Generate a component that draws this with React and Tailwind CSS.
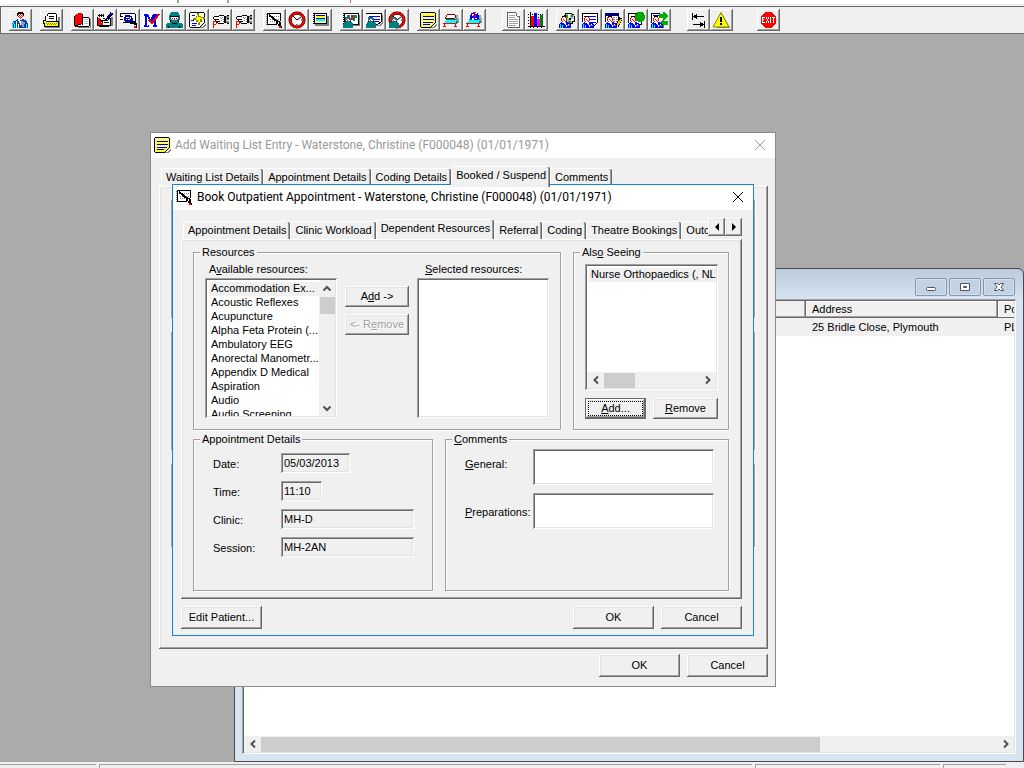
import React, { useState } from "react";
import clsx from "clsx";

const raised =
  "bg-[#f0f0f0] shadow-[inset_-1px_-1px_0_#696969,inset_1px_1px_0_#fff,inset_-2px_-2px_0_#a0a0a0,inset_2px_2px_0_#e3e3e3]";
const sunken =
  "shadow-[inset_1px_1px_0_#a0a0a0,inset_-1px_-1px_0_#fff,inset_2px_2px_0_#696969,inset_-2px_-2px_0_#e3e3e3]";

/* ---------- toolbar icons, drawn on a 19x18 grid ---------- */

const P = ({ f, d }) => <path fill={f} d={d} />;
const L = ({ s = "#000", w = 1, d }) => <path fill="none" stroke={s} strokeWidth={w} d={d} />;

const Clinician = () => (
  <g>
    <P f="#fff" d="M4 6h4v5H4z" />
    <P f="#f00" d="M3 7h1v3H3zM8 7h1v3H8zM4 6h1v1H4zM7 6h1v1H7zM5 8h1v1H5zM6 9h1v1H6zM4 10h1v1H4zM7 10h1v1H7z" />
    <P f="#000" d="M4 5h4v1H4z" />
    <P f="#00f" d="M3 11h1v1h4v-1h2v1h2v1h1v4H1v-4h1v-1h1z" />
    <P f="#fff" d="M5 11h2v1h1v2h1v2H8v-2H7v-1H6v-1H5zM10 13h1v2h-1z" />
    <P f="#0ff" d="M2 13h1v4H2zM4 14h1v3H4z" />
    <P f="#808080" d="M9 14h3v1H9z" />
  </g>
);

const TealHead = () => (
  <g>
    <P f="#008080" d="M3 6h5v1h1v4h1v1h1v5H1v-4h1v-2h1z" />
    <P f="#fff" d="M4 8h4v2H4z" />
    <P f="#f00" d="M4 8h1v1H4zM7 8h1v1H7zM5 9h1v1H5z" />
    <P f="#000" d="M3 10h1v1H3zM8 10h1v1H8z" />
  </g>
);

const Hand = () => (
  <g>
    <P f="#fff" d="M3 6h5V5h5v8H8v-2H5V8H3z" />
    <P f="#000" d="M3 5h5v1H3zM2 6h1v2H2zM3 8h5v1H3zM8 4h5v1H8zM5 10h4v1H5zM4 9h1v1H4zM7 12h6v1H7zM6 11h1v1H6zM13 5h2v7h-2z" />
    <P f="#808080" d="M15 5h3v2h-3zM15 8h3v1h-3zM15 10h3v2h-3zM9 6h1v1H9zM11 6h1v1h-1zM10 7h1v1h-1zM12 8h1v1h-1zM10 9h1v1h-1zM12 10h1v1h-1z" />
    <P f="#000" d="M16 4h2v1h-2zM16 12h2v1h-2zM16 7h2v1h-2z" />
    <P f="#f00" d="M2 10h1v7H2zM3 10h2v1H3zM5 11h1v2H5zM3 13h2v1H3z" />
  </g>
);

const Bed = () => (
  <g>
    <P f="#a0a0a0" d="M14 4h2v3h1v5h-3z" />
    <P f="#0ff" d="M4 9h11v1h-1v2H2v-1h1v-1h1z" />
    <P f="#008080" d="M4 8h11v1H4zM14 10h2v2h-2z" />
    <P f="#f00" d="M1 12h14v1H1zM2 13h1v2H2zM13 13h1v2h-1zM1 15h3v1H1zM12 15h3v1h-3z" />
  </g>
);

const Clock = () => (
  <g shapeRendering="auto">
    <circle cx="9" cy="9" r="7" fill="#fff" stroke="#000" strokeWidth="3" />
    <circle cx="9" cy="9" r="7" fill="none" stroke="#f00" strokeWidth="2" />
    <L d="M5 5l4 4 4-3" />
    <path stroke="#000" strokeDasharray="1 1" d="M9 3v2M9 13v2M3 9h2M13 9h2" />
  </g>
);

const icons = {
  patient: (
    <g>
      <P f="#000" d="M7 1h5v1h1v3h-1V3H7v2H6V2h1z" />
      <P f="#fff" d="M7 3h5v5H7z" />
      <P f="#f00" d="M7 3h1v1H7zM9 3h1v1H9zM11 3h1v1h-1zM8 4h1v1H8zM10 4h1v1h-1zM7 5h1v1H7zM9 5h1v1H9zM11 5h1v1h-1zM8 6h1v1H8zM10 6h1v1h-1zM9 7h1v1H9z" />
      <P f="#0040c0" d="M4 9h2V8h2v1h3V8h2v1h2v1h1v2h1v5H1v-5h1v-2h2z" />
      <P f="#fff" d="M7 8h2v2h1v4H9v-2H8v-2H7zM5 10h1v7H5zM7 13h1v4H7z" />
      <P f="#0ff" d="M4 9h1v1H4zM2 11h1v2H2zM1 13h1v4H1zM3 13h1v4H3zM15 13h1v4h-1z" />
      <P f="#a0a0a0" d="M10 10h2v1h2v2h-1v3h-2v-2h-1z" />
    </g>
  ),
  cards: (
    <g>
      <P f="#808080" d="M3 15h15v2H3zM16 6h2v10h-2z" />
      <P f="#fff" d="M6 3h8v8H4V5h2z" />
      <L d="M6 2.500h8M14.500 3v7M5.500 3v2M3.500 5v5M7 5.500h5M7 7.500h5" />
      <P f="#000" d="M1 9h3v1h13v6H2v-3H1z" />
      <P f="#ff0" d="M2 10h2v1h12v4H3v-3H2z" />
      <P f="#808000" d="M4 12h1v1H4zM6 12h1v1H6zM8 12h1v1H8zM10 12h1v1h-1zM12 12h1v1h-1zM14 12h1v1h-1zM5 13h1v1H5zM7 13h1v1H7zM9 13h1v1H9zM11 13h1v1h-1zM13 13h1v1h-1z" />
    </g>
  ),
  book: (
    <g>
      <P f="#808080" d="M17 8h1v9H5v-1h12z" />
      <P f="#fff" d="M9 6h7v9H9z" />
      <P f="#f00" d="M2 4h1V3h2V2h4v11H7v1H5v1H2z" />
      <L d="M1.500 5v10M2 15.500h14M16.500 7v8M9 6.500h7M9.500 3v11M5 2.500h1M2 14.500h3M5 13.500h3" />
      <L s="#c0c0c0" d="M11 8.500h4M11 10.500h4M11 12.500h4" />
    </g>
  ),
  bookPen: (
    <g>
      <P f="#808080" d="M15 6h2v9h-2z" />
      <P f="#fff" d="M4 5h10v9H4z" />
      <P f="#f00" d="M2 7h2v1h1v6H2zM5 12h2v2H5z" />
      <L d="M1.500 6v9M2 14.500h12M14.500 7v8M2 4.500h6M7 7.500h2M6 9.500h3M8 11.500h5M3 15.500h10M4 8l3 4" />
      <P f="#000" d="M3 3h1v3H3zM5 3h1v3H5zM7 3h1v3H7z" />
      <L w={3} d="M10 10l6-8" />
      <L s="#00c" w={1} d="M11 8l5-6" />
      <P f="#fff" d="M11 8h1v1h-1z" />
    </g>
  ),
  referral: (
    <g>
      <P f="#fff" d="M2 3h14v8H2z" />
      <L d="M1 2.500h15M16.500 3v8M1 5.500h3M1 8.500h3M4 11.500h8M1.500 3v2" />
      <P f="#000" d="M11 10h6v2h1v5h-1v-3h-2v-1h-4z" />
      <P f="#0000c0" d="M6 4h5v1h2v2h1v3h-2v1H6v-1H5V6h1z" />
      <P f="#fff" d="M7 6h3v1H7zM9 8h2v1H9zM7 8h1v1H7zM11 6h1v2h-1z" />
      <P f="#f00" d="M15 15h2v2h-2z" />
    </g>
  ),
  milestone: (
    <g>
      <P f="#fff" d="M0 0h19v18H0z" />
      <P f="#00f" d="M2 3h4v1h1v2h1v2h1V6h1V4h1V3h4v2h-1v9h1v2h-4v-2h1V8h-1v2h-1v2H8v-2H7V8H6v6h1v2H2v-2h1V5H2z" />
      <P f="#fff" d="M5 6h1v9H5zM11 8h1v6h-1z" />
      <L s="#f00" w={2} d="M7 9l3 3 7-9" />
    </g>
  ),
  surgeon: (
    <g>
      <P f="#008080" d="M6 1h7v1h1v2h1v5h-1v3h3v1h1v4H1v-4h1v-1h3V9H4V4h1V2h1z" />
      <P f="#000" d="M5 5h9v1H5zM5 9h1v2H5zM13 9h1v2h-1zM7 12h5v1H7zM3 15h1v2H3zM14 15h1v2h-1z" />
      <P f="#fff" d="M6 6h7v3H6z" />
      <P f="#0000c0" d="M7 7h1v1H7zM11 7h1v1h-1z" />
      <P f="#f00" d="M6 8h1v1H6zM9 7h1v2H9zM12 8h1v1h-1z" />
    </g>
  ),
  newEntry: (
    <g>
      <P f="#808080" d="M4 16h10l4-4v2l-3 3H4z" />
      <P f="#fff" d="M2 2h14v10l-4 4H2z" />
      <L d="M1.500 2v14M2 1.500h14M16.500 2v10M2 16.500h10M12 16l4-4" />
      <P f="#808000" d="M9 2h2v3h2v1h4v2h-3v3h-2v3h-2v-3H8V9H5V7h3V5h1z" />
      <P f="#ff0" d="M9 4h1v2h3v1h2v1h-3v3h-1v1h-1V9H8V7h1z" />
      <L s="#00f" d="M4 4.500h3M3 9.500h3M4 12.500h5M4 14.500h4" />
      <P f="#ff0" d="M6 3h1v1H6zM13 3h1v1h-1zM7 11h1v1H7zM14 11h1v1h-1z" />
    </g>
  ),
  pointOne: <Hand />,
  pointTwo: <Hand />,
  appointment: (
    <g>
      <P f="#fff" d="M2 3h13v10H2z" />
      <L d="M2 2.500h14M15.500 3v7M2.500 3v11M3 13.500h9" />
      <path stroke="#808080" strokeDasharray="1 1" d="M5 5.500h9M5 8.500h9M5 10.500h6M1.500 3v11" />
      <L w={2} d="M4 4l9 7" />
      <P f="#000" d="M11 9h2v1h2v1h1v4h1v2h-3v-2h-1v-2h-2z" />
      <P f="#fff" d="M13 11h1v2h-1z" />
      <P f="#f00" d="M14 15h2v2h-2z" />
    </g>
  ),
  clock: <Clock />,
  schedule: (
    <g>
      <P f="#808080" d="M4 13h14v2H4zM16 5h2v9h-2z" />
      <P f="#000" d="M2 2h14v11H2z" />
      <P f="#fff" d="M4 3h11v9H4z" />
      <P f="#0000c0" d="M5 4h9v1H5z" />
      <P f="#ff0" d="M5 5h9v2H5z" />
      <P f="#00f" d="M5 7h9v1H5z" />
      <P f="#0ff" d="M5 8h9v2H5z" />
      <P f="#ff0" d="M5 10h9v1H5z" />
      <path stroke="#fff" strokeDasharray="1 1" d="M2.500 3v9" />
    </g>
  ),
  clinicChart: (
    <g>
      <P f="#808080" d="M4 14h14v1H4zM17 4h1v10h-1z" />
      <P f="#000" d="M1 2h16v12H1z" />
      <P f="#fff" d="M3 3h13v10H3z" />
      <P f="#f00" d="M9 4h2v5H9z" />
      <P f="#008080" d="M5 4h3v2H5zM11 4h2v6h-2z" />
      <P f="#0a0" d="M13 4h2v3h-2z" />
      <path stroke="#fff" strokeDasharray="1 1" d="M1.500 3v10" />
      <TealHead />
    </g>
  ),
  clinicList: (
    <g>
      <P f="#808080" d="M17 4h1v8l-3 3H5v-1h9l3-3z" />
      <P f="#fff" d="M2 3h14v8l-3 3H2z" />
      <L d="M1 2.500h16M16.500 3v8M9 13.500h4M13 13l3-2" />
      <L s="#00f" d="M4 5.500h11M4 8.500h11M8 10.500h6" />
      <TealHead />
    </g>
  ),
  clinicClock: (
    <g>
      <Clock />
      <TealHead />
    </g>
  ),
  waitingList: (
    <g>
      <P f="#808080" d="M4 17v-1h10l4-4v2l-3 3z" />
      <P f="#ff0" d="M2 2h14v10l-4 4H2z" />
      <path
        stroke="#fff"
        strokeDasharray="1 1"
        d="M2 2.500h13M3 3.500h13M2 6.500h13M3 7.500h13M2 9.500h13M3 10.500h13M2 12.500h12M3 14.500h9"
      />
      <L d="M1.500 2v14M2 1.500h14M16.500 2v10M2 16.500h10M12 16l4-4" />
      <L s="#00c" d="M4 5.500h11M4 8.500h11M4 11.500h10M4 13.500h7" />
    </g>
  ),
  bed: (
    <g>
      <Bed />
      <P f="#fff" d="M5 4h8v3H4V5h1z" />
      <P f="#800000" d="M5 3h8v1H5zM13 4h1v3h-1zM4 4h1v2H4zM3 6h1v2H3zM4 7h9v1H4z" />
    </g>
  ),
  bedPatient: (
    <g>
      <Bed />
      <P f="#00f" d="M6 2h7v2h1v4h-1v1H6V8H5V4h1z" />
      <P f="#fff" d="M7 3h2v2H7zM10 2h2v1h-2zM7 7h2v2H7zM10 7h2v1h-2z" />
      <P f="#f00" d="M8 1h3v1H8zM8 4h3v1H8zM9 5h2v1H9z" />
    </g>
  ),
  letter: (
    <g>
      <P f="#fff" d="M4 2h9l3 3v11H4z" />
      <L s="#606060" d="M3.500 1v15M4 1.500h8M12.500 2v3M13 5.500h3M15.500 5v11M4 16.500h12" />
      <L s="#a0a0a0" d="M5 4.500h6M5 6.500h6M5 8.500h9M5 10.500h9M5 12.500h9M5 14.500h7" />
    </g>
  ),
  chart: (
    <g>
      <path stroke="#000" strokeDasharray="1 1" d="M1 3.500h16M1 6.500h16M1 9.500h16M1 12.500h16" />
      <P f="#f00" d="M4 5h3v10H4z" />
      <P f="#00f" d="M7 2h3v13H7z" />
      <P f="#f0f" d="M10 8h3v7h-3z" />
      <P f="#008000" d="M13 4h3v11h-3z" />
      <L d="M3.500 1v16M1 15.500h17M6.500 15v2M10.500 15v2M14.500 15v2" />
    </g>
  ),
  clinicianDisc: (
    <g>
      <P f="#000" d="M7 2h7v1h2v2h1v6h-2v2h-2v1H8v-3H6V4h1z" />
      <P f="#c0c0c0" d="M8 3h6v1h2v6h-2v2H9V9H7V5h1z" />
      <P f="#0a0" d="M8 4h2v3H8zM13 4h2v2h-2zM10 10h3v2h-3z" />
      <P f="#fff" d="M10 3h2v4h-2zM13 8h3v2h-3z" />
      <P f="#000" d="M11 7h2v2h-2z" />
      <Clinician />
    </g>
  ),
  clinicianList: (
    <g>
      <P f="#fff" d="M2 3h15v9l-3 2H2z" />
      <L d="M1 2.500h16M16.500 3v9M11 14.500h3M14 14l2-2M1.500 3v8" />
      <L s="#00f" d="M3 5.500h12M9 8.500h6M10 11.500h5" />
      <Clinician />
    </g>
  ),
  clinicianEdit: (
    <g>
      <P f="#fff" d="M2 3h12v10H2z" />
      <P f="#000080" d="M1 2h14v3H1z" />
      <L d="M14.500 5v6M1.500 5v6M10 13.500h3" />
      <path stroke="#808080" strokeDasharray="2 1" d="M3 6.500h10M9 8.500h5M9 10.500h4" />
      <L w={4} d="M17 7l-4 8" />
      <L s="#ffc000" w={2} d="M17 8l-4 7" />
      <Clinician />
    </g>
  ),
  clinicianTree: (
    <g>
      <P f="#fff" d="M2 3h13v10H2z" />
      <L d="M1 2.500h9M1.500 3v9M11 13.500h4M14.500 10v4" />
      <P f="#00a000" d="M10 1h6v1h1v2h1v4h-1v2h-2v1h-4v-1H9V8H8V3h2z" />
      <P f="#00e000" d="M11 3h1v1h-1zM14 3h1v1h-1zM12 5h1v1h-1zM15 6h1v1h-1zM10 6h1v1h-1zM13 8h1v1h-1z" />
      <Clinician />
    </g>
  ),
  clinicianTransfer: (
    <g>
      <P f="#fff" d="M2 3h13v10H2z" />
      <L d="M1 2.500h9M1.500 3v9" />
      <L s="#00f" d="M3 4.500h6M3 7.500h5" />
      <P f="#00b000" d="M9 3h4V1h1l4 4v1l-4 3h-1V7H9zM18 10v4h-4v3h-1l-4-4v-1l4-4h1v2z" />
      <Clinician />
    </g>
  ),
  transfer: (
    <g>
      <P f="#000" d="M3 2h1v7H3zM4 5h11v1H4zM5 4h2v3H5zM7 3h1v5H7zM15 10h1v7h-1zM4 13h11v1H4zM12 12h2v3h-2zM11 11h1v5h-1z" />
    </g>
  ),
  warning: (
    <g shapeRendering="auto">
      <path fill="#808080" d="M10 3l8 14H5z" />
      <path fill="#ff0" stroke="#808000" d="M9 1.500L17 16H1z" />
      <P f="#000" d="M8 6h2v5H8zM8 12h2v2H8z" />
    </g>
  ),
  exit: (
    <g>
      <P f="#f00" d="M6 1h7v1h1v1h1v1h1v1h1v8h-1v1h-1v1h-1v1h-1v1H6v-1H5v-1H4v-1H3v-1H2V5h1V4h1V3h1V2h1z" />
      <L s="#fff" d="M3 6.500h3M3.500 6v6M3 8.500h2M3 11.500h3M7 6l3 6M10 6l-3 6M11.500 6v6M13 6.500h3M14.500 6v6" />
    </g>
  ),
};

const toolbar = [
  [["patient", "Patient"]],
  [["cards", "Card index"]],
  [
    ["book", "Open book"],
    ["bookPen", "Edit book"],
    ["referral", "Referral"],
    ["milestone", "Milestone"],
    ["surgeon", "Theatre"],
    ["newEntry", "New entry"],
    ["pointOne", "Previous"],
    ["pointTwo", "Next"],
  ],
  [
    ["appointment", "Book appointment"],
    ["clock", "Clock"],
    ["schedule", "Schedule"],
  ],
  [
    ["clinicChart", "Clinic chart"],
    ["clinicList", "Clinic list"],
    ["clinicClock", "Clinic times"],
  ],
  [
    ["waitingList", "Waiting list"],
    ["bed", "Bed"],
    ["bedPatient", "Inpatient"],
  ],
  [],
  [
    ["letter", "Letter"],
    ["chart", "Reports"],
  ],
  [
    ["clinicianDisc", "Clinician"],
    ["clinicianList", "Clinician list"],
    ["clinicianEdit", "Clinician edit"],
    ["clinicianTree", "Clinician tree"],
    ["clinicianTransfer", "Clinician transfer"],
  ],
  [],
  [
    ["transfer", "Transfer"],
    ["warning", "Alerts"],
  ],
  [],
  [],
  [["exit", "Exit"]],
];

const Icon = ({ name, className = "h-[18px] w-[19px]" }) => (
  <svg viewBox="0 0 19 18" className={className} shapeRendering="crispEdges" aria-hidden="true">
    {icons[name]}
  </svg>
);

const Toolbar = () => (
  <div role="toolbar" className="flex h-7 shrink-0 items-center gap-2 border-y border-l border-[#696969] bg-[#f0f0f0] pl-2">
    {toolbar.map((group, i) => (
      <div key={i} className="flex">
        {group.map(([name, label]) => (
          <button
            key={name}
            aria-label={label}
            className="flex h-[22px] w-[23px] items-center justify-center bg-[#f0f0f0] shadow-[inset_-1px_-1px_0_#696969,inset_1px_1px_0_#fff,inset_-2px_-2px_0_#a0a0a0]"
          >
            <Icon name={name} />
          </button>
        ))}
      </div>
    ))}
  </div>
);

/* ---------- common controls ---------- */

const PushButton = ({ children, className, ...rest }) => (
  <button className={clsx("flex shrink-0 items-center justify-center", raised, className)} {...rest}>
    {children}
  </button>
);

const etched = "border border-[#a0a0a0] shadow-[1px_1px_0_#fff,inset_1px_1px_0_#fff]";

const GroupBox = ({ title, className, children }) => (
  <fieldset className={clsx("min-w-0", etched, className)}>
    <legend className="ml-1.5 bg-[#f0f0f0] px-0.5 leading-[13px]">{title}</legend>
    {children}
  </fieldset>
);

const chevrons = {
  up: "M1.500 6.500L5 3l3.500 3.500",
  down: "M1.500 3.500L5 7l3.500-3.500",
  left: "M7 1.500L3.500 5 7 8.500",
  right: "M3 1.500L6.500 5 3 8.500",
};

const Chevron = ({ dir }) => (
  <svg viewBox="0 0 10 10" className="size-[10px]" aria-hidden="true">
    <path d={chevrons[dir]} fill="none" stroke="#505050" strokeWidth="2" />
  </svg>
);

const ArrowButton = ({ dir }) => (
  <button aria-label={`Scroll ${dir}`} className="flex size-[17px] shrink-0 items-center justify-center">
    <Chevron dir={dir} />
  </button>
);

const Cross = () => (
  <svg viewBox="0 0 12 12" className="size-3" aria-hidden="true">
    <path d="M1 1l10 10M11 1L1 11" fill="none" stroke="currentColor" />
  </svg>
);

const TitleBar = ({ icon, children, active }) => (
  <div
    className={clsx(
      "flex h-[25px] items-center bg-white pr-[9px] pb-px pl-0.5 font-[Roboto,'Open_Sans',sans-serif] text-[12px]",
      active ? "text-black" : "text-[#999]"
    )}
  >
    <Icon name={icon} />
    <h2 className="ml-[3px] flex-1 whitespace-nowrap">{children}</h2>
    <button aria-label="Close">
      <Cross />
    </button>
  </div>
);

const Tab = ({ selected, children, onClick }) => (
  <button
    role="tab"
    aria-selected={selected}
    onClick={onClick}
    className={clsx(
      "shrink-0 rounded-t-xs border-t border-l border-white bg-[#f0f0f0] px-1 whitespace-nowrap shadow-[inset_-1px_0_0_#696969,inset_-2px_0_0_#a0a0a0]",
      selected ? "z-10 -mb-px h-[21px] pb-1" : "h-[18px]"
    )}
  >
    {children}
  </button>
);

/* ---------- background window ---------- */

const CaptionButton = ({ label, children }) => (
  <button
    aria-label={label}
    className="flex h-[18px] w-8 items-center justify-center rounded-xs border border-[#8496ae] bg-[#c2d2e3] shadow-[inset_0_0_0_1px_#d3e0ed]"
  >
    <svg viewBox="0 0 12 10" className="h-2.5 w-3" fill="#fff" stroke="#4c5566" aria-hidden="true">
      {children}
    </svg>
  </button>
);

const PatientListWindow = () => (
  <section className="absolute top-[234px] right-0 bottom-0 left-[234px] flex flex-col rounded-t-md border border-[#484848] bg-[#d7e4f2] bg-linear-to-b from-[#bbccdc] to-[#d7e4f2] to-[31px] px-[7px] pb-[7px]">
    <div className="flex h-[30px] shrink-0 items-center justify-end gap-0.5 pt-1.5 pr-px">
      <CaptionButton label="Minimise">
        <rect x="1.500" y="5.500" width="9" height="3" rx="1" />
      </CaptionButton>
      <CaptionButton label="Restore">
        <path d="M1.500 1.500h9v7h-9z" />
        <path d="M4.500 4.500h3v1h-3z" />
      </CaptionButton>
      <CaptionButton label="Close">
        <path d="M1.500 1.500h3L6 3l1.500-1.500h3L8 5l2.500 3.500h-3L6 7 4.500 8.500h-3L4 5z" />
      </CaptionButton>
    </div>
    <div className={clsx("flex min-h-0 flex-1 flex-col bg-white p-0.5", sunken)}>
      <div className="min-h-0 flex-1 overflow-hidden">
        <table className="w-full table-fixed border-collapse text-left">
          <thead>
            <tr className="h-[17px]">
              <th className="w-[562px] bg-[#f0f0f0] p-0 font-normal shadow-[inset_-1px_-1px_0_#696969,inset_-2px_-2px_0_#a0a0a0]" />
              <th className="w-[192px] bg-[#f0f0f0] p-0 pl-1.5 font-normal shadow-[inset_-1px_-1px_0_#696969,inset_-2px_-2px_0_#a0a0a0,inset_1px_1px_0_#fff]">
                Address
              </th>
              <th className="overflow-hidden bg-[#f0f0f0] p-0 pl-1.5 font-normal whitespace-nowrap shadow-[inset_0_-1px_0_#696969,inset_1px_1px_0_#fff]">
                Po
              </th>
            </tr>
          </thead>
          <tbody>
            <tr className="h-[18px] bg-[#f0f0f0]">
              <td className="p-0" />
              <td className="p-0 pl-1.5">25 Bridle Close, Plymouth</td>
              <td className="overflow-hidden p-0 pl-1.5 whitespace-nowrap">PL</td>
            </tr>
          </tbody>
        </table>
      </div>
      <div className="flex h-4 shrink-0 items-center bg-[#f0f0f0]">
        <ArrowButton dir="left" />
        <div className="flex h-[15px] flex-1">
          <div className="w-[76%] bg-[#cdcdcd]" />
        </div>
        <ArrowButton dir="right" />
      </div>
    </div>
  </section>
);

/* ---------- Add Waiting List Entry ---------- */

const waitingTabs = [
  "Waiting List Details",
  "Appointment Details",
  "Coding Details",
  "Booked / Suspend",
  "Comments",
];

const WaitingListDialog = () => {
  const [tab, setTab] = useState("Booked / Suspend");

  return (
    <section className="absolute top-[98px] left-[150px] flex h-[555px] w-[626px] flex-col border border-[#8a8a8a] bg-[#f0f0f0]">
      <TitleBar icon="waitingList">Add Waiting List Entry - Waterstone, Christine (F000048) (01/01/1971)</TitleBar>
      <div className="flex flex-1 flex-col pt-2 pr-[7px] pb-[9px] pl-2">
        <div role="tablist" className="flex h-[20px] items-end pl-0.5">
          {waitingTabs.map((name) => (
            <Tab key={name} selected={name === tab} onClick={() => setTab(name)}>
              {name}
            </Tab>
          ))}
        </div>
        <div className={clsx("flex flex-1 flex-col gap-3.5 pt-3.5 pr-[13px] pb-[102px] pl-3", raised)}>
          <fieldset className={clsx("flex-[119]", etched)} />
          <fieldset className={clsx("flex-[119]", etched)} />
          <fieldset className={clsx("flex-[83]", etched)} />
        </div>
        <div className="mt-[5px] flex justify-end gap-[7px]">
          <PushButton className="h-[23px] w-[81px]">OK</PushButton>
          <PushButton className="h-[23px] w-[81px]">Cancel</PushButton>
        </div>
      </div>
    </section>
  );
};

/* ---------- Book Outpatient Appointment ---------- */

const bookingTabs = [
  "Appointment Details",
  "Clinic Workload",
  "Dependent Resources",
  "Referral",
  "Coding",
  "Theatre Bookings",
  "Outcome",
];

const availableResources = [
  "Accommodation Ex...",
  "Acoustic Reflexes",
  "Acupuncture",
  "Alpha Feta Protein (...",
  "Ambulatory EEG",
  "Anorectal Manometr...",
  "Appendix D Medical",
  "Aspiration",
  "Audio",
  "Audio Screening",
];

const appointmentFields = [
  { id: "date", label: "Date:", value: "05/03/2013", width: "w-[69px]" },
  { id: "time", label: "Time:", value: "11:10", width: "w-[41px]" },
  { id: "clinic", label: "Clinic:", value: "MH-D", width: "w-[133px]" },
  { id: "session", label: "Session:", value: "MH-2AN", width: "w-[133px]" },
];

const optionClass = "h-[14px] min-h-0 p-0 pl-0.5 leading-[14px] text-black first:bg-[#f0f0f0]";
const listClass = "min-w-0 flex-1 appearance-none overflow-hidden border-0 bg-white p-0 pt-0.5 pl-0.5 outline-none";

const ResourcesGroup = () => (
  <GroupBox title="Resources" className="h-[184px] flex-1">
    <div className="flex gap-2 pt-1 pl-[11px]">
      <div className="flex flex-col">
        <label htmlFor="available" className="h-[15px] pl-1 leading-[13px]">
          A<u>v</u>ailable resources:
        </label>
        <div className={clsx("flex h-[140px] w-[132px] bg-white p-0.5", sunken)}>
          <select id="available" size={10} className={listClass}>
            {availableResources.map((name) => (
              <option key={name} className={optionClass}>
                {name}
              </option>
            ))}
          </select>
          <div className="flex w-4 flex-col items-center bg-[#f0f0f0]">
            <ArrowButton dir="up" />
            <div className="w-[15px] flex-1">
              <div className="h-[17px] bg-[#cdcdcd]" />
            </div>
            <ArrowButton dir="down" />
          </div>
        </div>
      </div>
      <div className="flex flex-col gap-[7px] pt-[23px]">
        <PushButton className="h-[21px] w-16">
          <span>
            A<u>d</u>d -&gt;
          </span>
        </PushButton>
        <PushButton disabled className="h-[21px] w-16 text-[#a0a0a0] [text-shadow:1px_1px_0_#fff]">
          <span>
            &lt;- R<u>e</u>move
          </span>
        </PushButton>
      </div>
      <div className="flex flex-col">
        <label htmlFor="selected" className="h-[15px] pl-2 leading-[13px]">
          <u>S</u>elected resources:
        </label>
        <div className={clsx("flex h-[140px] w-[132px] bg-white p-0.5", sunken)}>
          <select id="selected" size={10} className={listClass} />
        </div>
      </div>
    </div>
  </GroupBox>
);

const AlsoSeeingGroup = () => (
  <GroupBox
    title={
      <>
        Als<u>o</u> Seeing
      </>
    }
    className="h-[184px] w-[156px]"
  >
    <div className="flex flex-col gap-2 pt-[5px] pr-2.5 pl-[11px]">
      <div className={clsx("flex h-[126px] flex-col bg-white p-0.5", sunken)}>
        <select size={7} aria-label="Also Seeing" className={clsx(listClass, "w-full")}>
          <option className={clsx(optionClass, "whitespace-nowrap")}>Nurse Orthopaedics (, NLO</option>
        </select>
        <div className="flex h-4 shrink-0 items-center bg-[#f0f0f0]">
          <ArrowButton dir="left" />
          <div className="h-[15px] flex-1">
            <div className="h-full w-[31px] bg-[#cdcdcd]" />
          </div>
          <ArrowButton dir="right" />
        </div>
      </div>
      <div className="flex justify-between">
        <PushButton className="h-[21px] w-[61px] border border-[#696969] p-0.5">
          <span className="flex h-full w-full items-center justify-center border border-dotted border-black">
            <span>
              <u>A</u>dd...
            </span>
          </span>
        </PushButton>
        <PushButton className="h-[21px] w-[65px]">
          <span>
            <u>R</u>emove
          </span>
        </PushButton>
      </div>
    </div>
  </GroupBox>
);

const AppointmentGroup = () => (
  <GroupBox title="Appointment Details" className="h-[158px] w-60">
    <div className="flex flex-col gap-2 pt-[7px] pl-[19px]">
      {appointmentFields.map(({ id, label, value, width }) => (
        <div key={id} className="flex h-5 items-center">
          <label htmlFor={id} className="w-[68px] pt-0.5">
            {label}
          </label>
          <input
            id={id}
            readOnly
            defaultValue={value}
            className={clsx("h-5 bg-[#f0f0f0] px-[3px] outline-none", sunken, width)}
          />
        </div>
      ))}
    </div>
  </GroupBox>
);

const CommentsGroup = () => (
  <GroupBox
    title={
      <>
        <u>C</u>omments
      </>
    }
    className="h-[158px] flex-1"
  >
    <div className="flex flex-col gap-2 pt-[3px] pl-[19px]">
      <div className="flex">
        <label htmlFor="general" className="w-[68px] pt-[9px]">
          <u>G</u>eneral:
        </label>
        <textarea id="general" className={clsx("h-9 w-[181px] resize-none bg-white p-1 outline-none", sunken)} />
      </div>
      <div className="flex items-center">
        <label htmlFor="preparations" className="w-[68px] pt-0.5">
          <u>P</u>reparations:
        </label>
        <textarea id="preparations" className={clsx("h-9 w-[181px] resize-none bg-white p-1 outline-none", sunken)} />
      </div>
    </div>
  </GroupBox>
);

const BookingDialog = () => {
  const [tab, setTab] = useState("Dependent Resources");

  return (
    <section className="absolute top-[150px] left-[172px] flex w-[582px] flex-col border border-[#1883d7] bg-[#f0f0f0]">
      <TitleBar icon="appointment" active>
        Book Outpatient Appointment - Waterstone, Christine (F000048) (01/01/1971)
      </TitleBar>
      <div className="flex flex-col pt-2 pr-[11px] pb-1.5 pl-2">
        <div className="flex h-[21px]">
          <div role="tablist" className="flex min-w-0 flex-1 items-end overflow-hidden pl-0.5">
            {bookingTabs.map((name) => (
              <Tab key={name} selected={name === tab} onClick={() => setTab(name)}>
                {name}
              </Tab>
            ))}
          </div>
          <PushButton aria-label="Scroll tabs left" className="h-[18px] w-[17px]">
            <svg viewBox="0 0 4 8" className="h-2 w-1">
              <path d="M4 0v8L0 4z" />
            </svg>
          </PushButton>
          <PushButton aria-label="Scroll tabs right" className="h-[18px] w-[17px]">
            <svg viewBox="0 0 4 8" className="h-2 w-1">
              <path d="M0 0v8l4-4z" />
            </svg>
          </PushButton>
        </div>
        <div className={clsx("flex flex-col gap-[3px] pt-[7px] pr-[13px] pb-2 pl-3", raised)}>
          <div className="flex gap-3">
            <ResourcesGroup />
            <AlsoSeeingGroup />
          </div>
          <div className="flex gap-3">
            <AppointmentGroup />
            <CommentsGroup />
          </div>
        </div>
        <div className="mt-[7px] flex gap-[7px]">
          <PushButton className="mr-auto h-[23px] w-[81px]">Edit Patient...</PushButton>
          <PushButton className="h-[23px] w-[81px]">OK</PushButton>
          <PushButton className="h-[23px] w-[81px]">Cancel</PushButton>
        </div>
      </div>
    </section>
  );
};

const StatusBar = () => (
  <footer className="flex h-1.5 shrink-0 gap-[3px] overflow-hidden bg-[#f0f0f0] pt-0.5">
    <div className="w-24 border-t border-[#a0a0a0]" />
    <div className="flex-1 border-t border-l border-[#a0a0a0]" />
    <div className="w-[185px] border-t border-l border-[#a0a0a0]" />
    <div className="mr-[18px] w-[63px] border-t border-l border-[#a0a0a0]" />
  </footer>
);

export default function App() {
  return (
    <div className="flex h-screen flex-col overflow-hidden bg-white font-['Liberation_Sans',Arial,sans-serif] text-[11px] leading-[13px] text-black">
      <div className="flex h-1.5 shrink-0 items-start border-b-2 border-[#f0f0f0] pl-[177px]">
        <i className="mr-12 h-[3px] w-0.5 bg-[#7ab87a]" />
        <i className="mr-[121px] h-[3px] w-0.5 bg-[#8fa8d8]" />
        <i className="h-[3px] w-px bg-[#d06060]" />
      </div>
      <Toolbar />
      <main className="relative min-h-0 flex-1 bg-[#ababab]">
        <PatientListWindow />
        <WaitingListDialog />
        <BookingDialog />
      </main>
      <StatusBar />
    </div>
  );
}
